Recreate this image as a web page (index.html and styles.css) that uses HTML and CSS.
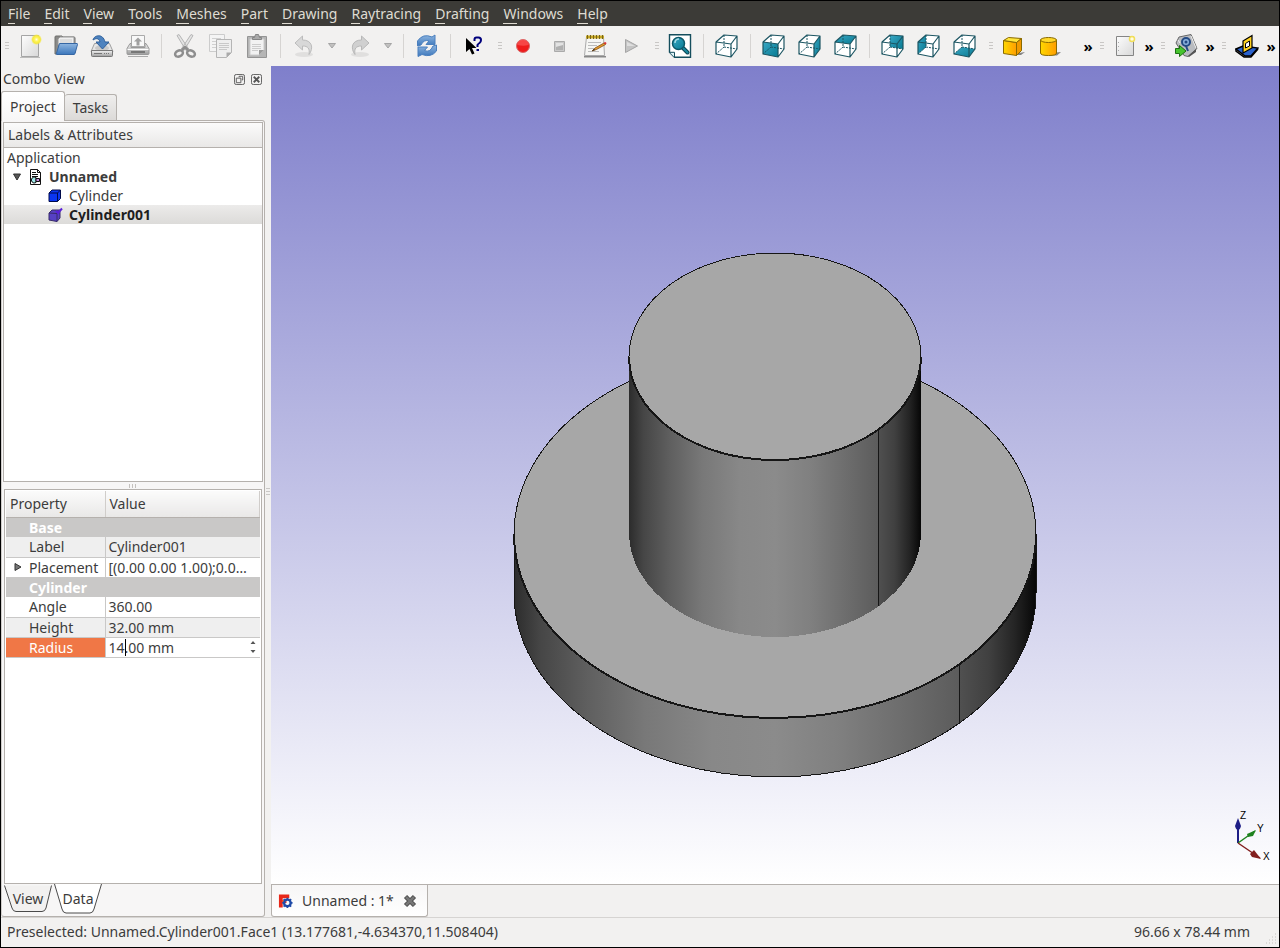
FILE: index.html
```html
<!DOCTYPE html>
<html lang="en">
<head>
    <meta charset="UTF-8">
    <meta name="viewport" content="width=device-width, initial-scale=1.0">
    <title>FreeCAD</title>
    <link rel="stylesheet" href="styles.css">
</head>
<body>
    <!-- shared shapes -->
    <svg class="defs" width="0" height="0" aria-hidden="true">
        <defs>
            <linearGradient id="teal" x1="0" y1="0" x2="1" y2="1">
                <stop offset="0" stop-color="#3aa7c4"/>
                <stop offset="1" stop-color="#067a92"/>
            </linearGradient>
            <linearGradient id="paper" x1="0" y1="0" x2="1" y2="1">
                <stop offset="0" stop-color="#fdfdfd"/>
                <stop offset="1" stop-color="#d8d8d8"/>
            </linearGradient>
            <linearGradient id="metal" x1="0" y1="0" x2="0" y2="1">
                <stop offset="0" stop-color="#f4f4f4"/>
                <stop offset="1" stop-color="#9c9c9c"/>
            </linearGradient>
            <linearGradient id="blue" x1="0" y1="0" x2="0" y2="1">
                <stop offset="0" stop-color="#8fb6e0"/>
                <stop offset="1" stop-color="#3b76bb"/>
            </linearGradient>
            <linearGradient id="gold" x1="0" y1="0" x2="1" y2="0">
                <stop offset="0" stop-color="#ffd800"/>
                <stop offset="1" stop-color="#ff9d00"/>
            </linearGradient>
            <radialGradient id="glow">
                <stop offset="0" stop-color="#fffde0"/>
                <stop offset=".35" stop-color="#fff45c"/>
                <stop offset=".7" stop-color="#f5e83c"/>
                <stop offset="1" stop-color="#f5e83c" stop-opacity="0"/>
            </radialGradient>
            <symbol id="wire" viewBox="0 0 24 24">
                <path d="M9 1V13L1 20M9 13L22 15" fill="none" stroke="#1d5663" stroke-dasharray="2 1"/>
                <path d="M1 8L16 10V23L1 20ZM1 8L9 1L22 2L16 10M22 2V15L16 23" fill="none" stroke="#1d5663" stroke-width="1.2" stroke-linejoin="round"/>
            </symbol>
        </defs>
    </svg>

    <nav class="menubar">
        <button><u>F</u>ile</button>
        <button><u>E</u>dit</button>
        <button><u>V</u>iew</button>
        <button><u>T</u>ools</button>
        <button><u>M</u>eshes</button>
        <button><u>P</u>art</button>
        <button><u>D</u>rawing</button>
        <button><u>R</u>aytracing</button>
        <button><u>D</u>rafting</button>
        <button><u>W</u>indows</button>
        <button><u>H</u>elp</button>
    </nav>

    <div class="toolbars">
        <!-- file -->
        <div class="toolbar">
            <span class="handle"></span>
            <button class="tool" aria-label="New">
                <svg viewBox="0 0 24 24"><path d="M3.500 1.500h17v21h-17z" fill="url(#paper)" stroke="#a5a5a5"/><path d="M2 23.500h20" stroke="#888" opacity=".5"/><circle cx="18.500" cy="5.500" r="5.500" fill="url(#glow)"/></svg>
            </button>
            <button class="tool" aria-label="Open">
                <svg viewBox="0 0 24 24"><path d="M1 20L1 3Q1 2 2 2h6l1 1h11q1 0 1 1v15z" fill="#8a8a88" stroke="#6e6e6c"/><path d="M4 5l2-2h14v8H4z" fill="#efefef" stroke="#999"/><path d="M6 6h12M6 8h12" stroke="#ccc"/><path d="M5.500 9.500H23q.7 0 .5 1L21 19.500q-.3 1-1 1H3q-1 0-.6-1z" fill="url(#blue)" stroke="#3667a4"/></svg>
            </button>
            <button class="tool" aria-label="Save">
                <svg viewBox="0 0 24 24"><path d="M4.500 9.500h15l3.500 8H1z" fill="#e6e6e6" stroke="#a0a0a0"/><ellipse cx="12" cy="14" rx="7" ry="3" fill="#cacaca"/><path d="M1.500 16.500h21v5q0 1-1 1h-19q-1 0-1-1z" fill="url(#metal)" stroke="#777"/><path d="M4 19.500h8M14 19.500h1M16 19.500h1M18 19.500h1" stroke="#777"/><path d="M3 6C4 1 13-1 15 8h4l-6.500 7L6 8h4C9 4 6 4 3 6z" fill="#4e83bf" stroke="#2f609c"/></svg>
            </button>
            <button class="tool" aria-label="Print">
                <svg viewBox="0 0 24 24"><path d="M5.500 1.500h13v11h-13z" fill="#f8f8f8" stroke="#aaa"/><path d="M12 3.500l4 4h-2.500v4h-3v-4H8z" fill="#a0a0a0"/><path d="M4 9.500h1v4h14v-4h1l3 5v5q0 1-1 1H2q-1 0-1-1v-5z" fill="url(#metal)" stroke="#999"/><path d="M1.500 15.500h21" stroke="#fff"/><path d="M5 18h14" stroke="#777" stroke-width="2"/><path d="M2 22.500h20" stroke="#aaa"/></svg>
            </button>
            <span class="sep"></span>
            <button class="tool" aria-label="Cut">
                <svg viewBox="0 0 24 24"><path d="M4 1.500l2-1 10 15-3 1zM20 1.500l-2-1L8 15.500l3 1z" fill="#e4e4e4" stroke="#b4b4b4"/><g fill="none" stroke="#8e8e8e" stroke-width="2.500"><ellipse cx="6" cy="19.500" rx="4" ry="3" transform="rotate(-25 6 19.500)"/><ellipse cx="18" cy="19.500" rx="4" ry="3" transform="rotate(25 18 19.500)"/><path d="M9 16l3-3 3 3"/></g></svg>
            </button>
            <button class="tool" aria-label="Copy">
                <svg viewBox="0 0 24 24"><path d="M.5.500h15v17H.5z" fill="#f4f4f4" stroke="#ccc"/><path d="M3 4.500h9M3 7.500h5M3 10.500h4M3 13.500h4" stroke="#d0d0d0"/><path d="M7.500 5.500h15v13l-5 5h-10z" fill="#eee" stroke="#b5b5b5"/><path d="M10 9.500h10M10 11.500h10M10 13.500h10M10 15.500h8" stroke="#c8c8c8"/><path d="M17.500 23.500v-5h5z" fill="#aaa"/></svg>
            </button>
            <button class="tool" aria-label="Paste">
                <svg viewBox="0 0 24 24"><path d="M2.500 2.500h19v21h-19z" fill="#b5b5b5" stroke="#949494"/><path d="M5 5h14v11l-5 5H5z" fill="#f2f2f2" stroke="#ccc"/><path d="M7 10.500h9M7 12.500h9M7 14.500h9M7 16.500h6" stroke="#ccc"/><path d="M14 21v-5h5z" fill="#999"/><path d="M7.500 5.500v-2h2l1-3h3l1 3h2v2z" fill="#a9a9a9" stroke="#858585"/></svg>
            </button>
            <span class="sep"></span>
            <button class="tool" aria-label="Undo">
                <svg viewBox="0 0 24 24"><ellipse cx="12" cy="20.500" rx="9" ry="2.500" fill="#e0dfde"/><path d="M3 9L10.500 2v4C20 6 22 14 17 20.500c1-6-1-8.500-6.500-8.500v4z" fill="#d8d8d8" stroke="#bcbcbc"/></svg>
            </button>
            <button class="drop" aria-label="Undo list"><svg viewBox="0 0 8 6"><path d="M.5.500h7L4 5z" fill="#c2c1c0" stroke="#a5a5a5"/></svg></button>
            <button class="tool" aria-label="Redo">
                <svg viewBox="0 0 24 24"><ellipse cx="12" cy="20.500" rx="9" ry="2.500" fill="#e0dfde"/><path d="M21 9L13.500 2v4C4 6 2 14 7 20.500c-1-6 1-8.500 6.500-8.500v4z" fill="#d0d0d0" stroke="#b8b8b8"/></svg>
            </button>
            <button class="drop" aria-label="Redo list"><svg viewBox="0 0 8 6"><path d="M.5.500h7L4 5z" fill="#c2c1c0" stroke="#a5a5a5"/></svg></button>
            <span class="sep"></span>
            <button class="tool" aria-label="Refresh">
                <svg viewBox="0 0 24 24"><path d="M2.500 12V7Q8-1 17 3l3-2v9.500h-9l3-3.500Q9 5 6 11z" fill="url(#blue)" stroke="#4a7fbe"/><path d="M21.500 11v6Q16 24 7 20.500l-4 2V13h9.500l-3 3.500Q15 19 18 12z" fill="url(#blue)" stroke="#4a7fbe"/></svg>
            </button>
            <span class="sep"></span>
            <button class="tool" aria-label="What's this?">
                <svg viewBox="0 0 24 24"><path d="M4 4v14l3.500-3 2.500 5.500 2.500-1L10 14h4.500z" fill="#000"/><path d="M12.500 7V5.500q0-2 2-2h2q2.500 0 2.500 2.500 0 2-1.500 3t-2 2V13" fill="none" stroke="#00007c" stroke-width="2"/><path d="M14.500 15h2.500v2h-2.500z" fill="#00007c"/></svg>
            </button>
        </div>

        <!-- macro -->
        <div class="toolbar">
            <span class="handle"></span>
            <button class="tool" aria-label="Record macro">
                <svg viewBox="0 0 24 24"><circle cx="12" cy="12" r="6.500" fill="#ee1c1c" stroke="#d86a6a"/><path d="M6.500 11a5.500 5.500 0 0 1 11 0q-5 1.500-11 0z" fill="#ff6a6a" opacity=".55"/></svg>
            </button>
            <button class="tool" aria-label="Stop macro">
                <svg viewBox="0 0 24 24"><path d="M7.500 7.500h10v10h-10z" fill="#c9c9c9" stroke="#aaa"/><path d="M9 9h7v3l-7 1z" fill="#e2e2e2"/><path d="M9 13l7-2v5H9z" fill="#b0b0b0"/></svg>
            </button>
            <button class="tool" aria-label="Macros">
                <svg viewBox="0 0 24 24"><path d="M3.500 3h17l1 18.500H1.500z" fill="#f6f6f4" stroke="#aaa"/><path d="M1 22h22v1.500H1z" fill="#888"/><path d="M3 1.500h18v3H3z" fill="#c8a823"/><path d="M4.500 1v4M7.500 1v4M10.500 1v4M13.500 1v4M16.500 1v4M19.500 1v4" stroke="#766417"/><path d="M5 8.500h13M5 11.500h9M5 14.500h6M5 17.500h11" stroke="#bbb"/><path d="M9 17l3-3 9-5 1.500 1.500-9 5z" fill="#e59b2d" stroke="#805019" stroke-width=".8"/><path d="M20.500 9l1.500-1q1.500 0 1.500 1.500l-1 1z" fill="#d33"/><path d="M9 17l2-2 1 1z" fill="#222"/></svg>
            </button>
            <button class="tool" aria-label="Execute macro">
                <svg viewBox="0 0 24 24"><path d="M6.500 5.500v13l12-6.500z" fill="#c4c4c4" stroke="#a5a5a5"/><path d="M8 12V8l8 4z" fill="#dedede"/></svg>
            </button>
        </div>

        <!-- view -->
        <div class="toolbar">
            <span class="handle"></span>
            <button class="tool" aria-label="Fit all">
                <svg viewBox="0 0 24 24"><path d="M1.500.700h21v22.600h-16l-5-5z" fill="#fff" stroke="#154e5d" stroke-width="1.400"/><path d="M1.500 18.300h5v5" fill="#dff1f4" stroke="#154e5d"/><path d="M15 14l4.500 4.500" stroke="#0b4654" stroke-width="4" stroke-linecap="round"/><path d="M15 14l4.500 4.500" stroke="#17899f" stroke-width="2" stroke-linecap="round"/><circle cx="10.500" cy="9.500" r="6" fill="url(#teal)" stroke="#0b5768" stroke-width="1.500"/><path d="M7 9q0-4 4-4" fill="none" stroke="#a6dce6" stroke-width="1.500"/></svg>
            </button>
            <span class="sep"></span>
            <button class="tool" aria-label="Axonometric">
                <svg viewBox="0 0 24 24"><path d="M1 8L9 1L22 2V15L16 23L1 20Z" fill="#fff"/><use href="#wire"/></svg>
            </button>
            <span class="sep"></span>
            <button class="tool" aria-label="Front">
                <svg viewBox="0 0 24 24"><path d="M1 8L9 1L22 2V15L16 23L1 20Z" fill="#fff"/><path d="M1 8L16 10V23L1 20Z" fill="url(#teal)"/><use href="#wire"/></svg>
            </button>
            <button class="tool" aria-label="Right">
                <svg viewBox="0 0 24 24"><path d="M1 8L9 1L22 2V15L16 23L1 20Z" fill="#fff"/><path d="M16 10L22 2V15L16 23Z" fill="url(#teal)"/><use href="#wire"/></svg>
            </button>
            <button class="tool" aria-label="Top">
                <svg viewBox="0 0 24 24"><path d="M1 8L9 1L22 2V15L16 23L1 20Z" fill="#fff"/><path d="M1 8L9 1L22 2L16 10Z" fill="url(#teal)"/><use href="#wire"/></svg>
            </button>
            <span class="sep"></span>
            <button class="tool" aria-label="Rear">
                <svg viewBox="0 0 24 24"><path d="M1 8L9 1L22 2V15L16 23L1 20Z" fill="#fff"/><path d="M9 1L22 2V15L9 13Z" fill="url(#teal)"/><use href="#wire"/></svg>
            </button>
            <button class="tool" aria-label="Left">
                <svg viewBox="0 0 24 24"><path d="M1 8L9 1L22 2V15L16 23L1 20Z" fill="#fff"/><path d="M1 8L9 1V13L1 20Z" fill="url(#teal)"/><use href="#wire"/></svg>
            </button>
            <button class="tool" aria-label="Bottom">
                <svg viewBox="0 0 24 24"><path d="M1 8L9 1L22 2V15L16 23L1 20Z" fill="#fff"/><path d="M1 20L9 13L22 15L16 23Z" fill="url(#teal)"/><use href="#wire"/></svg>
            </button>
        </div>

        <!-- part -->
        <div class="toolbar grow">
            <span class="handle"></span>
            <button class="tool" aria-label="Box">
                <svg viewBox="0 0 24 24"><path d="M10 20l13-2-4 3H10z" fill="#555" opacity=".7"/><path d="M1.500 6.500l13 2v13l-13-2z" fill="url(#gold)" stroke="#8a6a00"/><path d="M1.500 6.500l5-3 13 1-5 4z" fill="#ffe63b" stroke="#8a6a00"/><path d="M14.500 8.500l5-4v12l-5 5z" fill="#f09a00" stroke="#8a6a00"/></svg>
            </button>
            <button class="tool" aria-label="Cylinder">
                <svg viewBox="0 0 24 24"><path d="M12 19l11-1-4 3.500h-8z" fill="#555" opacity=".7"/><path d="M2.500 6v13q0 2.500 8 2.500t8-2.500V6z" fill="url(#gold)" stroke="#8a6a00"/><ellipse cx="10.500" cy="6" rx="8" ry="2.500" fill="#ffd92b" stroke="#8a6a00"/></svg>
            </button>
            <button class="more" aria-label="More part tools">»</button>
        </div>

        <!-- drawing -->
        <div class="toolbar">
            <span class="handle"></span>
            <button class="tool" aria-label="New drawing">
                <svg viewBox="0 0 24 24"><path d="M3.500 2.500h17v19h-17z" fill="url(#paper)" stroke="#858585"/><path d="M5.500 8v1M5.500 12v1M5.500 16v1" stroke="#aaa"/><circle cx="19" cy="5" r="2.500" fill="#fffce0" stroke="#f2df58" stroke-width="1.500"/></svg>
            </button>
            <button class="more" aria-label="More drawing tools">»</button>
        </div>

        <!-- raytracing -->
        <div class="toolbar">
            <span class="handle"></span>
            <button class="tool" aria-label="Export to POV-Ray">
                <svg viewBox="0 0 24 24"><path d="M5 3l12-2.500 6 14-9 8-4-1L2 9z" fill="#b9bcc0" stroke="#666"/><path d="M14 22l8-7v3l-7 5z" fill="#555"/><path d="M4 6l2 3M17 2l5 12" stroke="#eee"/><circle cx="12" cy="8" r="4" fill="#8cb1dc" stroke="#244a84" stroke-width="2"/><circle cx="12" cy="8" r="1.500" fill="#244a84"/><path d="M12 12l2 5" stroke="#244a84" stroke-width="2"/><path d="M1.500 14.500h4v-3l6.500 5.500-6.500 5.500v-3h-4z" fill="#47c42e" stroke="#1d6f12"/></svg>
            </button>
            <button class="more" aria-label="More raytracing tools">»</button>
        </div>

        <!-- draft -->
        <div class="toolbar">
            <span class="handle"></span>
            <button class="tool" aria-label="Working plane">
                <svg viewBox="0 0 24 24"><path d="M1 15l7-3 15 2-7 8H10z" fill="#2b62cc" stroke="#000" stroke-width="1.500"/><path d="M1 15v2l8 6h7l7-8" fill="none" stroke="#000" stroke-width="1.500"/><path d="M8 7l9-5.500V14l-9 5z" fill="#ffd21f" stroke="#000" stroke-width="1.200"/><path d="M10.500 9.500l4-2.500v5l-4 2z" fill="#fff" stroke="#000"/></svg>
            </button>
            <button class="more" aria-label="More draft tools">»</button>
        </div>
    </div>

    <div class="workspace">
        <aside class="dock">
            <header class="dock-title">
                <h2>Combo View</h2>
                <button aria-label="Float"><svg viewBox="0 0 12 12"><rect x=".5" y=".5" width="11" height="11" rx="2"/><path d="M5.500 3.500V2.500h4v4h-1M2.500 4.500h5v5h-5z"/></svg></button>
                <button aria-label="Close"><svg viewBox="0 0 12 12"><rect x=".5" y=".5" width="11" height="11" rx="2"/><path d="M3 3l6 6M9 3l-6 6" stroke-width="2"/></svg></button>
            </header>

            <div class="tabs">
                <button class="tab active">Project</button>
                <button class="tab">Tasks</button>
            </div>

            <div class="panel">
                <div class="tree">
                    <div class="tree-head">Labels &amp; Attributes</div>
                    <ul>
                        <li>Application</li>
                        <li class="doc">
                            <svg class="arrow" viewBox="0 0 8 8"><path d="M.5 1h7L4 7z" fill="#555" stroke="#333"/></svg>
                            <svg class="ico" viewBox="0 0 16 16"><path d="M3.500.500h7l3 3v12h-10z" fill="#fff" stroke="#111"/><path d="M10.500.500v3h3M5 3.500h4M5 5.500h6M5 7.500h6" fill="none" stroke="#111"/><path d="M9 8.500a3 3 0 1 0 0 5z" fill="#9fe8e8" stroke="#111"/><path d="M9 9.500h3.500v3H9z" fill="#c58be0" stroke="#111"/></svg>
                            <b>Unnamed</b>
                        </li>
                        <li class="item">
                            <svg class="ico" viewBox="0 0 16 16"><path d="M2 5l3-3h8.500v8.500l-3 3H2z" fill="#0a35f0" stroke="#000b4a"/><path d="M2 5h8.500v8.500M10.500 5l3-3" fill="none" stroke="#000b4a"/></svg>
                            Cylinder
                        </li>
                        <li class="item selected">
                            <svg class="ico" viewBox="0 0 16 16"><path d="M2 6l3-3h8v8l-3 3.500L2 13z" fill="#5640c4" stroke="#372a68"/><path d="M2 6l8 .5v8M10 6.500L13 3" fill="none" stroke="#372a68"/><path d="M9 4l2 2 4-4.500" fill="none" stroke="#5a20d8" stroke-width="2"/></svg>
                            <b>Cylinder001</b>
                        </li>
                    </ul>
                </div>

                <div class="grip"></div>

                <div class="props">
                    <table>
                        <thead>
                            <tr><th>Property</th><th>Value</th></tr>
                        </thead>
                        <tbody>
                            <tr class="group"><th colspan="2">Base</th></tr>
                            <tr class="alt"><td>Label</td><td>Cylinder001</td></tr>
                            <tr>
                                <td><svg class="expand" viewBox="0 0 8 8"><path d="M1 .5v7L7 4z" fill="#777" stroke="#333"/></svg>Placement</td>
                                <td>[(0.00 0.00 1.00);0.0…</td>
                            </tr>
                            <tr class="group"><th colspan="2">Cylinder</th></tr>
                            <tr><td>Angle</td><td>360.00</td></tr>
                            <tr class="alt"><td>Height</td><td>32.00 mm</td></tr>
                            <tr class="editing">
                                <td><label for="radius">Radius</label></td>
                                <td>
                                    <div class="spin">
                                        <input id="radius" type="text" value="14.00 mm">
                                        <span class="caret"></span>
                                        <svg viewBox="0 0 6 14"><path d="M.5 4L3 1l2.500 3zM.5 10L3 13l2.500-3z" fill="#555"/></svg>
                                    </div>
                                </td>
                            </tr>
                        </tbody>
                    </table>
                </div>

                <div class="sheet-tabs">
                    <button class="sheet">
                        <svg viewBox="0 0 48 30"><path d="M.5 1.500L8 24q1 3.500 4 3.500h26q3 0 4-3.500L47.500 1.500" fill="#f2f1f0" stroke="#4a4a4a"/></svg>
                        <span>View</span>
                    </button>
                    <button class="sheet active">
                        <svg viewBox="0 0 48 30"><path d="M.5 0L8 25q1 4 4 4h24q3 0 4-4L47.500 0" fill="#fff" stroke="#4a4a4a"/></svg>
                        <span>Data</span>
                    </button>
                </div>
            </div>
        </aside>

        <div class="splitter"></div>

        <main class="mdi">
            <div class="viewport">
                <!-- 3D scene -->
                <svg class="scene" viewBox="0 0 1008 818" preserveAspectRatio="xMidYMid slice">
                    <defs>
                        <linearGradient id="side">
                            <stop offset="0" stop-color="#2c2c2c"/>
                            <stop offset=".05" stop-color="#464646"/>
                            <stop offset=".14" stop-color="#5f5f5f"/>
                            <stop offset=".25" stop-color="#787878"/>
                            <stop offset=".38" stop-color="#888"/>
                            <stop offset=".5" stop-color="#8b8b8b"/>
                            <stop offset=".62" stop-color="#808080"/>
                            <stop offset=".75" stop-color="#6c6c6c"/>
                            <stop offset=".853" stop-color="#5c5c5c"/>
                            <stop offset=".854" stop-color="#505050"/>
                            <stop offset=".91" stop-color="#404040"/>
                            <stop offset=".96" stop-color="#242424"/>
                            <stop offset="1" stop-color="#060606"/>
                        </linearGradient>
                    </defs>
                    <g stroke="#161616" shape-rendering="crispEdges">
                        <path d="M243 468V527A261 184 0 0 0 765 527V468Z" fill="url(#side)"/>
                        <ellipse cx="504" cy="468" rx="261" ry="184" fill="#a7a7a7"/>
                        <path d="M243 468A261 184 0 0 0 765 468" fill="none" stroke-width="2"/>
                        <path d="M688.500 598V657" fill="none"/>
                        <path d="M358 291V467A146 104 0 0 0 650 467V291Z" fill="url(#side)" stroke="none"/>
                        <ellipse cx="504" cy="290.500" rx="146" ry="103.500" fill="#a7a7a7"/>
                        <path d="M358 290.500A146 103.500 0 0 0 650 290.500" fill="none" stroke-width="2"/>
                        <path d="M607.500 364V540" fill="none"/>
                    </g>
                </svg>
                <!-- axis cross -->
                <svg class="axes" viewBox="0 0 40 54">
                    <path d="M7 33V12" stroke="#1e1e86" stroke-width="2"/><path d="M7 8l3 8q-1 4-3 4t-3-4z" fill="#1e1e86"/>
                    <path d="M7 33L24 21" stroke="#1e821e" stroke-width="1.500"/><path d="M25 20l-3 6-5 1-1-3z" fill="#1e821e"/>
                    <path d="M7 33L29 48" stroke="#821e1e" stroke-width="1.500"/><path d="M30 49l-9-2-2-3 4-4z" fill="#821e1e"/>
                    <text x="9" y="9">Z</text><text x="26" y="22">Y</text><text x="32" y="50">X</text>
                </svg>
            </div>
            <div class="doc-tabs">
                <div class="doc-tab">
                    <svg class="logo" viewBox="0 0 16 16"><path d="M1 1h11v4H5v2h4v3H5v5H1z" fill="#e8281a"/><path d="M5 7l4 1-4 3z" fill="#ff8a3c"/><circle cx="10" cy="10" r="3.500" fill="none" stroke="#1f4ba8" stroke-width="2.500"/><path d="M10 4.500v2M10 13.500v2M4.500 10h2M13.500 10h2M6 6l1.500 1.500M12.500 12.500L14 14M14 6l-1.500 1.500M7.500 12.500L6 14" stroke="#1f4ba8" stroke-width="1.800"/></svg>
                    <span>Unnamed : 1*</span>
                    <button aria-label="Close document"><svg viewBox="0 0 14 14"><path d="M2.500 2.500l9 9M11.500 2.500l-9 9" stroke="#4a4a4a" stroke-width="4.500"/><path d="M3 3l8 8M11 3l-8 8" stroke="#777" stroke-width="2.500"/></svg></button>
                </div>
            </div>
        </main>
    </div>

    <footer class="statusbar">
        <span>Preselected: Unnamed.Cylinder001.Face1 (13.177681,-4.634370,11.508404)</span>
        <span>96.66 x 78.44 mm</span>
        <svg class="size-grip" viewBox="0 0 12 12"><path d="M10 1h1M7 4h1M10 4h1M4 7h1M7 7h1M10 7h1M1 10h1M4 10h1M7 10h1M10 10h1" stroke="#c4c1be" stroke-width="1"/></svg>
    </footer>
</body>
</html>
```
FILE: styles.css
```css
* {
    margin: 0;
    padding: 0;
    box-sizing: border-box;
}

body {
    display: flex;
    flex-direction: column;
    min-height: 100vh;
    border: 1px solid #000;
    background: #f2f1f0;
    color: #3c3c3c;
    font-family: "Noto Sans", "Open Sans", sans-serif;
    font-size: 14px;
    line-height: 20px;
}

button {
    border: 0;
    background: none;
    color: inherit;
    font: inherit;
}

svg {
    display: block;
    flex: none;
}

.defs {
    position: absolute;
}

/* menu */
.menubar {
    display: flex;
    gap: 14px;
    height: 25px;
    padding: 3px 7px 0;
    background: #3c3b37;
    color: #dfdbd2;
}

.menubar button {
    height: 20px;
}

.menubar u {
    border-bottom: 1px solid #dfdbd2;
    text-decoration: none;
}

/* toolbars */
.toolbars {
    display: flex;
    gap: 2px;
    height: 40px;
    padding-right: 2px;
}

.toolbar {
    display: flex;
    align-items: center;
}

.grow {
    flex: 1;
}

.handle {
    width: 11px;
    height: 8px;
    border: solid #f2f1f0;
    border-width: 0 3px 0 4px;
    background: repeating-linear-gradient(#c9c7c5 0 1px, transparent 1px 3px);
}

.tool {
    display: flex;
    justify-content: center;
    width: 36px;
}

.tool svg {
    width: 24px;
    height: 24px;
}

.sep {
    width: 11px;
    height: 24px;
    background: linear-gradient(#d6d4d2, #d6d4d2) center / 1px 100% no-repeat;
}

.drop {
    display: flex;
    justify-content: center;
    width: 20px;
}

.drop svg {
    width: 8px;
    height: 6px;
}

.more {
    width: 12px;
    margin-left: auto;
    color: #000;
    font-size: 15px;
    font-weight: bold;
}

/* combo view */
.workspace {
    display: flex;
    flex: 1;
}

.dock {
    display: flex;
    flex-direction: column;
    width: 264px;
}

.dock-title {
    display: flex;
    align-items: center;
    gap: 6px;
    height: 26px;
    padding: 0 3px 0 2px;
}

.dock-title h2 {
    flex: 1;
    font-size: 14px;
    font-weight: normal;
}

.dock-title svg {
    width: 11px;
    height: 11px;
    fill: none;
    stroke: #555;
}

.tabs {
    display: flex;
    align-items: flex-end;
    height: 28px;
}

.tab {
    height: 26px;
    padding: 0 8px;
    border: 1px solid #b5b1ad;
    border-width: 1px 1px 0 0;
    border-radius: 3px 3px 0 0;
    background: linear-gradient(#efeeed, #dcdad8);
}

.tab.active {
    position: relative;
    height: 30px;
    margin-bottom: -1px;
    border-left-width: 1px;
    background: linear-gradient(#fff, #f7f6f6);
}

.panel {
    display: flex;
    flex: 1;
    flex-direction: column;
    padding: 1px 1px 0;
    border: 1px solid #b5b1ad;
    border-left-color: #d0cdca;
    border-radius: 0 3px 3px 3px;
    background: #f7f6f6;
}

.tree {
    flex: 361;
    border: 1px solid #b5b1ad;
    background: #fff;
}

.tree-head {
    height: 25px;
    padding: 2px 4px;
    border-bottom: 1px solid #b5b1ad;
    background: linear-gradient(#fbfbfb, #e9e8e7);
}

.tree ul {
    list-style: none;
}

.tree li {
    display: flex;
    align-items: center;
    height: 19px;
    padding-left: 3px;
}

.tree .doc {
    padding-left: 9px;
}

.tree .item {
    padding-left: 43px;
}

.tree .selected {
    background: linear-gradient(#ecebea, #dcdbd9);
    color: #1e1e1e;
}

.arrow {
    width: 8px;
    height: 8px;
    margin-right: 6px;
}

.ico {
    width: 16px;
    height: 16px;
    margin-right: 6px;
}

.grip {
    height: 7px;
    background: repeating-linear-gradient(90deg, #c4c1be 0 1px, transparent 1px 3px) center / 8px 4px no-repeat;
}

.props {
    flex: 394;
    margin: 0 1px;
    padding: 1px;
    border: 1px solid #b5b1ad;
    background: #fff;
}

.props table {
    width: 100%;
    border-collapse: collapse;
    table-layout: fixed;
}

.props thead th {
    height: 26px;
    padding: 0 4px;
    border-right: 1px solid #d0cdca;
    border-bottom: 1px solid #b5b1ad;
    background: linear-gradient(#fbfbfb, #e9e8e7);
    font-weight: normal;
    text-align: left;
}

.props thead th:first-child {
    width: 99px;
}

.props tbody td,
.group th {
    height: 20px;
    overflow: hidden;
    line-height: 19px;
    text-align: left;
    text-overflow: ellipsis;
    white-space: nowrap;
}

.props td {
    padding-left: 3px;
    border-bottom: 1px solid #c9c8c7;
}

.props tbody td:first-child {
    position: relative;
    padding-left: 23px;
    border-right: 1px solid #c9c8c7;
}

.group th {
    padding-left: 23px;
    background: #c9c8c7;
    color: #fff;
}

.alt td {
    background: #efefef;
}

.editing td:first-child {
    background: #f07746;
    color: #fff;
}

.expand {
    position: absolute;
    top: 5px;
    left: 8px;
    width: 8px;
    height: 8px;
}

.spin {
    display: flex;
    position: relative;
    align-items: center;
    height: 19px;
    padding-right: 4px;
}

.spin input {
    flex: 1;
    min-width: 0;
    border: 0;
    outline: 0;
    background: none;
    color: inherit;
    font: inherit;
}

.spin svg {
    width: 6px;
    height: 14px;
}

.caret {
    position: absolute;
    top: 1px;
    left: 16px;
    width: 1px;
    height: 17px;
    background: #000;
}

.sheet-tabs {
    display: flex;
    gap: 2px;
    height: 32px;
    padding-left: 1px;
}

.sheet {
    position: relative;
    width: 48px;
    height: 30px;
}

.sheet svg {
    position: absolute;
    top: 0;
    left: 0;
    width: 48px;
    height: 30px;
}

.sheet span {
    position: relative;
}

.splitter {
    width: 6px;
    background: repeating-linear-gradient(#c9c7c5 0 1px, transparent 1px 3px) center / 4px 8px no-repeat;
}

/* document area */
.mdi {
    display: flex;
    flex: 1;
    flex-direction: column;
    min-width: 0;
}

.viewport {
    position: relative;
    flex: 1;
    overflow: hidden;
    background: linear-gradient(#7f7fcb, #fff);
}

.scene {
    position: absolute;
    width: 100%;
    height: 100%;
}

.axes {
    position: absolute;
    right: 8px;
    bottom: 20px;
    width: 40px;
    height: 54px;
}

.axes text {
    font: 10px "Liberation Sans", Arial, sans-serif;
}

.doc-tabs {
    display: flex;
    height: 33px;
    border-top: 1px solid #b5b1ad;
}

.doc-tab {
    display: flex;
    align-items: center;
    gap: 9px;
    padding: 0 10px 0 6px;
    border: 1px solid #b5b1ad;
    border-top: 0;
    border-radius: 0 0 3px 3px;
    background: linear-gradient(#f7f6f6, #fff);
}

.doc-tab svg {
    width: 14px;
    height: 14px;
}

.doc-tab .logo {
    width: 15px;
    height: 16px;
}

/* status */
.statusbar {
    display: flex;
    height: 30px;
    padding: 4px 2px 0 6px;
    border-top: 1px solid #d6d4d2;
}

.statusbar span:first-child {
    flex: 1;
}

.size-grip {
    align-self: flex-end;
    width: 12px;
    height: 12px;
    margin: 0 0 2px 15px;
}
```
